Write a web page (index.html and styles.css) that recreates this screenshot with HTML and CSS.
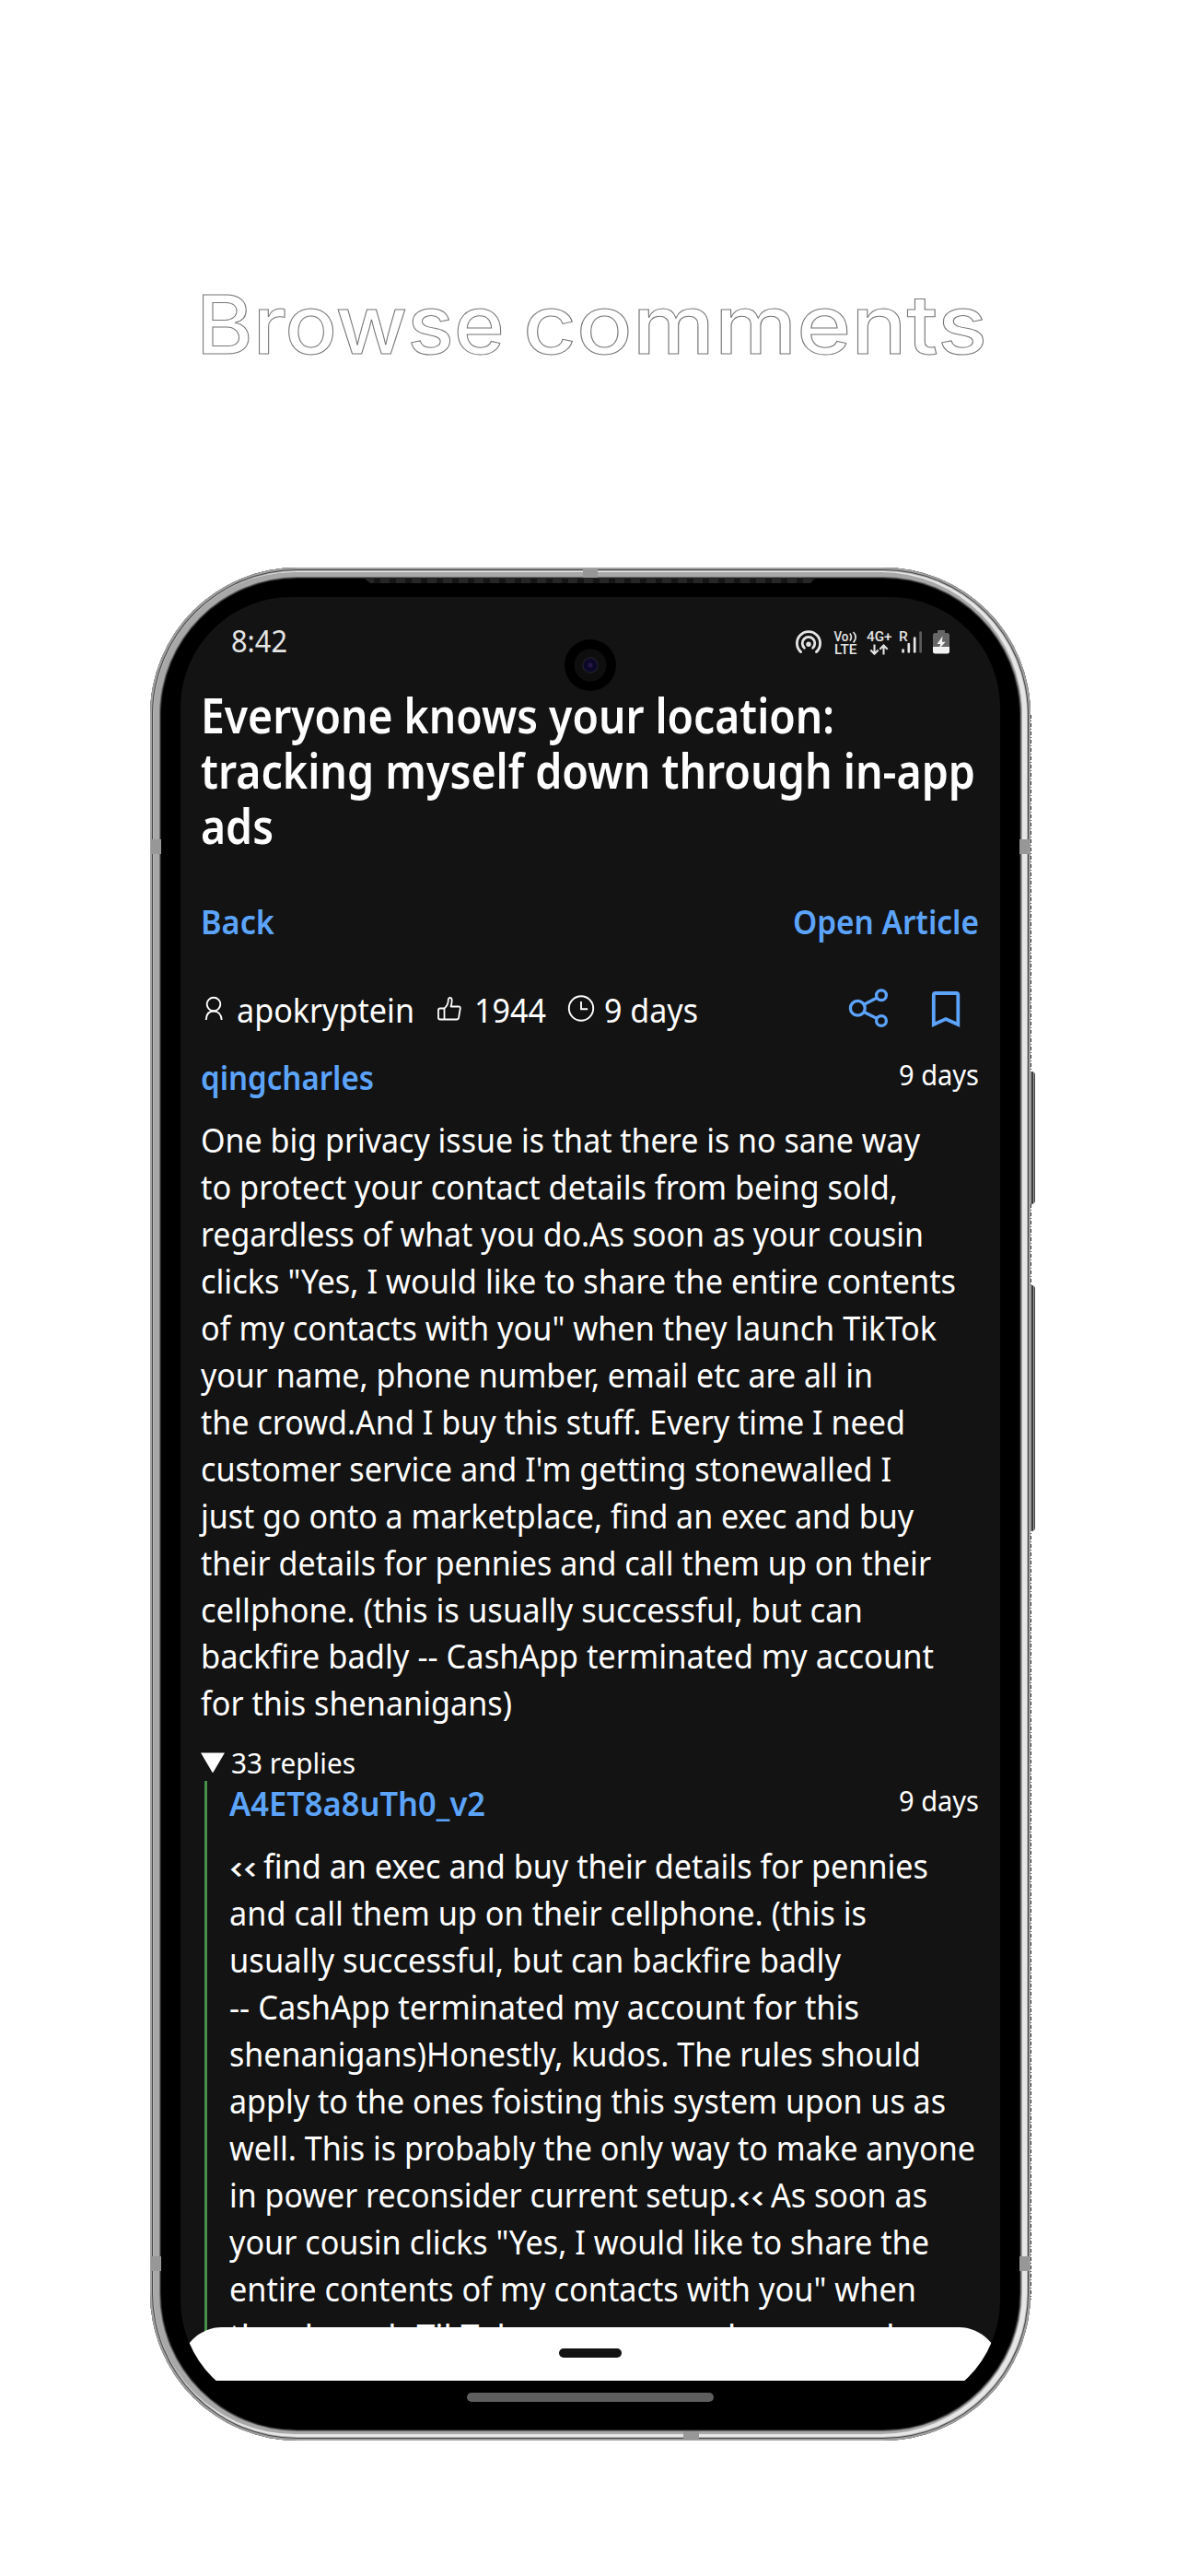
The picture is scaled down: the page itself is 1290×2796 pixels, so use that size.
FILE: index.html
```html
<!DOCTYPE html>
<html lang="en">
<head>
<meta charset="utf-8">
<title>Browse comments</title>
<link rel="stylesheet" href="styles.css">
</head>
<body>
<h1 class="headline"><span class="fit" data-w="335">Browse</span> <span class="fit" data-w="504">comments</span></h1>
<main class="phone">
  <i class="rim"></i>
  <i class="speaker"></i>
  <i class="notch notch-top"></i><i class="notch notch-l1"></i><i class="notch notch-r1"></i>
  <i class="notch notch-l2"></i><i class="notch notch-r2"></i><i class="notch notch-bottom"></i>
  <i class="edge"></i>
  <i class="key key-power"></i><i class="key key-volume"></i>
  <div class="screen">
    <div class="app">
      <i class="camera"></i>
      <header class="status">
        <span class="clock fit" data-w="61">8:42</span>
        <svg class="status-icons" width="180" height="36" viewBox="860 680 180 36">
          <g fill="none" stroke="#e4e4e4" stroke-width="2.800" stroke-linecap="round">
            <path d="M869.6 707.6A12.6 12.6 0 1 1 886.4 707.6"/>
            <path d="M873.4 703.2A6.8 6.8 0 1 1 882.6 703.2"/>
          </g>
          <circle cx="878" cy="699.3" r="2.7" fill="#e4e4e4"/>
          <g fill="#e4e4e4" font-family="Roboto, sans-serif" font-weight="500">
            <text x="905.5" y="696" font-size="15" textLength="16" lengthAdjust="spacingAndGlyphs">Vo</text>
            <text x="906" y="710" font-size="15.5" textLength="24.5" lengthAdjust="spacingAndGlyphs">LTE</text>
            <text x="941" y="696" font-size="15.5" textLength="27.500" lengthAdjust="spacingAndGlyphs">4G+</text>
            <text x="976" y="696" font-size="15.5">R</text>
          </g>
          <g fill="none" stroke="#e4e4e4" stroke-width="1.700">
            <path d="M922.800 687.500Q926 691.500 922.800 695.500M926.600 686Q931.600 691.500 926.600 697.500"/>
            <path stroke-width="2.100" d="M949.500 699.500V709.500M945.300 705.500L949.500 709.800L953.700 705.500M959.500 710.500V700.500M955.300 704.800L959.500 700.500L963.700 704.800"/>
          </g>
          <g stroke="#e4e4e4" stroke-width="2.700" stroke-linecap="round">
            <path d="M980.600 705.500V707.500M986.800 699V707.500M993.200 692.500V707.500"/>
            <path stroke="#5c5c5c" d="M999.600 686.500V707.500"/>
          </g>
          <path fill="#666" d="M1018 684h8v3h2.500a2.500 2.500 0 0 1 2.500 2.500V703h-18V689.500a2.500 2.500 0 0 1 2.500-2.500H1018z"/>
          <path fill="#f2f2f2" d="M1013 702h18v5a2.500 2.500 0 0 1-2.500 2.500h-13a2.500 2.500 0 0 1-2.500-2.500z"/>
          <path fill="#f2f2f2" d="M1023.500 690.500L1017.500 699h3.700L1019.500 704.500L1026.800 696.800H1023z"/>
        </svg>
      </header>
      <h2 class="title">
        <span class="line"><span class="fit" data-w="688">Everyone knows your location:</span></span>
        <span class="line"><span class="fit" data-w="841">tracking myself down through in-app</span></span>
        <span class="line"><span class="fit" data-w="79">ads</span></span>
      </h2>
      <nav class="links">
        <a class="fit" data-w="80">Back</a>
        <a class="fit" data-w="202">Open Article</a>
      </nav>
      <div class="meta">
        <svg width="27" height="32" viewBox="218 1080 27 32" fill="none" stroke="#fff" stroke-width="1.900"><circle cx="232" cy="1091" r="7.300"/><path d="M223.700 1108C224 1101.500 227.500 1098.500 232 1098.500S240.300 1101.500 240.700 1108"/></svg>
        <span class="who fit" data-w="193">apokryptein</span>
        <svg class="thumb" width="29" height="32" viewBox="473 1080 29 32" fill="none" stroke="#fff" stroke-width="1.800" stroke-linejoin="round"><path d="M482.500 1095.500C485.500 1093 486.800 1090 486.800 1086C487 1083 490.500 1083.200 490.700 1086.500C490.800 1089 490.300 1091 489.500 1093.500H498Q500 1093.500 499.800 1095.500L498 1106Q497.600 1107.500 496 1107.500H478Q476 1107.500 476 1105.500V1097.500Q476 1095.500 478 1095.500ZM482.500 1095.500V1107.500"/></svg>
        <span class="points fit" data-w="78">1944</span>
        <svg class="time" width="30" height="32" viewBox="616 1080 30 32" fill="none" stroke="#fff" stroke-width="1.900"><circle cx="631" cy="1095.500" r="13.200"/><path d="M631 1088V1096.300H638.200"/></svg>
        <span class="age fit" data-w="102">9 days</span>
        <svg class="share" width="50" height="50" viewBox="918 1070 50 50" fill="none" stroke="#5ca4fb" stroke-width="3.300"><circle cx="931.300" cy="1094.300" r="7.900"/><circle cx="957" cy="1080.300" r="5.400"/><circle cx="957" cy="1108" r="5.400"/><path d="M938.200 1090.200L952.300 1083M938.200 1098.400L952.300 1105.400"/></svg>
        <svg class="save" width="50" height="50" viewBox="1002 1070 50 50" fill="none" stroke="#5ca4fb" stroke-width="3.800"><path d="M1013.800 1112V1080Q1013.800 1078 1015.800 1078H1038.300Q1040.300 1078 1040.300 1080V1112L1027 1106Z"/></svg>
      </div>
      <section class="comment">
        <div class="by"><a class="fit" data-w="188">qingcharles</a><time class="fit" data-w="87">9 days</time></div>
        <div class="text">
          <span class="line"><span class="fit" data-w="781">One big privacy issue is that there is no sane way</span></span>
          <span class="line"><span class="fit" data-w="757">to protect your contact details from being sold,</span></span>
          <span class="line"><span class="fit" data-w="785">regardless of what you do.As soon as your cousin</span></span>
          <span class="line"><span class="fit" data-w="820">clicks "Yes, I would like to share the entire contents</span></span>
          <span class="line"><span class="fit" data-w="799">of my contacts with you" when they launch TikTok</span></span>
          <span class="line"><span class="fit" data-w="730">your name, phone number, email etc are all in</span></span>
          <span class="line"><span class="fit" data-w="765">the crowd.And I buy this stuff. Every time I need</span></span>
          <span class="line"><span class="fit" data-w="750">customer service and I'm getting stonewalled I</span></span>
          <span class="line"><span class="fit" data-w="774">just go onto a marketplace, find an exec and buy</span></span>
          <span class="line"><span class="fit" data-w="793">their details for pennies and call them up on their</span></span>
          <span class="line"><span class="fit" data-w="719">cellphone. (this is usually successful, but can</span></span>
          <span class="line"><span class="fit" data-w="796">backfire badly -- CashApp terminated my account</span></span>
          <span class="line"><span class="fit" data-w="338">for this shenanigans)</span></span>
        </div>
        <div class="replies"><i class="arrow"></i><span class="fit" data-w="135">33 replies</span></div>
        <section class="reply">
          <div class="by"><a class="fit" data-w="278">A4ET8a8uTh0_v2</a><time class="fit" data-w="87">9 days</time></div>
          <div class="text">
            <span class="line"><span class="fit" data-w="30">‹‹</span><span class="fit after-quote" data-w="722">find an exec and buy their details for pennies</span></span>
            <span class="line"><span class="fit" data-w="692">and call them up on their cellphone. (this is</span></span>
            <span class="line"><span class="fit" data-w="664">usually successful, but can backfire badly</span></span>
            <span class="line"><span class="fit" data-w="684">-- CashApp terminated my account for this</span></span>
            <span class="line"><span class="fit" data-w="751">shenanigans)Honestly, kudos. The rules should</span></span>
            <span class="line"><span class="fit" data-w="778">apply to the ones foisting this system upon us as</span></span>
            <span class="line"><span class="fit" data-w="810">well. This is probably the only way to make anyone</span></span>
            <span class="line"><span class="fit" data-w="551">in power reconsider current setup.</span><span class="fit" data-w="30">‹‹</span><span class="fit after-quote" data-w="170">As soon as</span></span>
            <span class="line"><span class="fit" data-w="760">your cousin clicks "Yes, I would like to share the</span></span>
            <span class="line"><span class="fit" data-w="746">entire contents of my contacts with you" when</span></span>
            <span class="line"><span class="fit" data-w="774">they launch TikTok your name, phone number,</span></span>
          </div>
        </section>
      </section>
      <div class="sheet"><i class="handle"></i></div>
    </div>
    <div class="navbar"><i class="pill"></i></div>
  </div>
</main>
<script src="fit.js"></script>
</body>
</html>
```
FILE: styles.css
```css
* { box-sizing: border-box; }
html, body { margin: 0; background: #fff; }
body {
  width: 1290px;
  height: 2796px;
  overflow: hidden;
  color: #fff;
  font-family: "Noto Sans", "Open Sans", sans-serif;
  font-size: 36px;
}
h1, h2 { margin: 0; }
i { display: block; }
a { color: #5ca4fb; font-weight: 600; }
.fit { display: inline-block; white-space: pre; transform-origin: 0 50%; flex: none; }

.headline {
  display: flex;
  align-items: flex-start;
  gap: 20px;
  height: 616px;
  padding: 300px 0 0 213px;
  font: 500 88px/104px Inter, sans-serif;
  color: #fff;
  -webkit-text-stroke: 1px #777;
}

/* device body */
.phone {
  position: relative;
  width: 956px;
  height: 2033px;
  margin-left: 163px;
  padding: 32px 33px 33px;
  border-radius: 160px;
  background: #000;
}
.rim {
  position: absolute;
  inset: 0;
  border-radius: 160px;
  box-shadow:
    inset 0 0 0 2px #a2a2a2,
    inset 0 0 0 3px #484848,
    inset 0 0 0 4px #b5b5b5,
    inset -3px -1px 0 6px #e6e6e6,
    inset 0 0 0 10px #a8a8a8,
    inset 0 0 0 11px #6b6b6b,
    inset 0 0 0 12px #262626;
}
.speaker {
  position: absolute;
  top: 12px;
  left: 233px;
  width: 490px;
  height: 5px;
  background: repeating-linear-gradient(90deg, #262626 0 10px, #151515 10px 17px);
  clip-path: polygon(0 0, 100% 0, calc(100% - 6px) 100%, 6px 100%);
}
.notch { position: absolute; background: #979797; }
.notch-top { top: 2px; left: 470px; width: 16px; height: 9px; }
.notch-bottom { bottom: 1px; left: 579px; width: 17px; height: 9px; }
.notch-l1, .notch-l2 { left: 1px; width: 11px; height: 16px; }
.notch-r1, .notch-r2 { right: 1px; width: 11px; height: 16px; }
.notch-l1, .notch-r1 { top: 295px; }
.notch-l2, .notch-r2 { top: 1833px; }
.edge {
  position: absolute;
  top: 160px;
  right: -1px;
  width: 1px;
  height: 1720px;
  background: repeating-linear-gradient(#333 0 4px, #fff 4px 6px, #333 6px 7px, #fff 7px 9px);
}
.key {
  position: absolute;
  right: -5px;
  width: 5px;
  border-radius: 0 4px 4px 0;
  background: linear-gradient(90deg, #999 0 1px, #3a3a3a 1px 3px, #999 3px 4px, #444 4px);
}
.key-power { top: 547px; height: 144px; }
.key-volume { top: 779px; height: 267px; }

.screen {
  height: 1968px;
  border-radius: 120px;
  overflow: hidden;
  background: #000;
}
.app {
  position: relative;
  height: 1936px;
  padding: 0 23px 0 22px;
  overflow: hidden;
  background: #131313;
}
.camera {
  position: absolute;
  top: 46px;
  left: 417px;
  width: 56px;
  height: 56px;
  border-radius: 50%;
  background: radial-gradient(circle, #2a1748 0 2px, #0b0828 3px 7px, #24242c 8px, #0e0e0e 9px 17px, #000 18px);
}

.status {
  display: flex;
  justify-content: space-between;
  height: 98px;
  padding: 27px 23px 0 33px;
}
.clock { font-size: 32px; line-height: 42px; color: #e4e4e4; }
.status-icons { margin-top: 5px; }

.title { font-size: 52px; font-weight: 600; line-height: 60px; }
.line { display: flex; }
.links {
  display: flex;
  justify-content: space-between;
  margin-top: 50px;
  line-height: 50px;
}
.meta {
  display: flex;
  align-items: center;
  height: 50px;
  margin-top: 44px;
}
.meta .fit { padding-top: 2px; }
.who { margin-left: 12px; }
.thumb { margin-left: 23px; }
.points { margin-left: 13px; }
.time { margin-left: 23px; }
.age { margin-left: 10px; }
.share { margin-left: auto; }
.save { margin: 0 11px 0 34px; }

.comment { margin-top: 25px; }
.by {
  display: flex;
  justify-content: space-between;
  line-height: 50px;
}
.by time { padding-top: 1px; font-size: 31px; line-height: 40px; }
.text { margin-top: 18px; line-height: 50.95px; }
.replies {
  display: flex;
  align-items: center;
  gap: 7px;
  margin-top: 18px;
  font-size: 31px;
  line-height: 40px;
}
.arrow {
  width: 26px;
  height: 22px;
  background: #fff;
  clip-path: polygon(0 0, 100% 0, 50% 100%);
}
.reply {
  margin-left: 4px;
  padding-left: 24px;
  border-left: 3px solid #46904a;
}
.after-quote { margin-left: 7px; }

.sheet {
  position: absolute;
  inset: auto 0 0;
  height: 58px;
  padding-top: 23px;
  border-radius: 45px 45px 0 0;
  background: #fff;
}
.handle { width: 68px; height: 10px; margin: 0 auto; border-radius: 5px; background: #131313; }
.navbar { height: 32px; padding-top: 13px; }
.pill { width: 268px; height: 10px; margin: 0 auto; border-radius: 5px; background: #5f5f5f; }
```
FILE: fit.js
```js
// Condense each text run to its intended width; margin keeps the flow in step.
document.querySelectorAll('.fit').forEach(function (el) {
  var target = Number(el.dataset.w);
  var natural = el.getBoundingClientRect().width;
  el.style.transform = 'scaleX(' + target / natural + ')';
  el.style.marginRight = target - natural + 'px';
});
```
